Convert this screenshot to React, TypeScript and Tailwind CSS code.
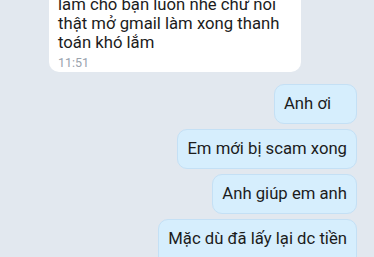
const sent = [
  { text: 'Anh ơi', pr: 'pr-[25px]' },
  { text: 'Em mới bị scam xong', pr: 'pr-[9px]' },
  { text: 'Anh giúp em anh', pr: 'pr-[9px]' },
];

const App = () => {
  return (
    <div
      className="h-[257px] w-[374px] overflow-hidden bg-[#e2e8ef] text-[16.7px] text-[#1c1c1c]"
      style={{ fontFamily: 'Roboto, "Noto Sans", sans-serif' }}
    >
      <div className="-mt-[13px] flex flex-col">
        {/* received message */}
        <div className="ml-[49px] w-[252px] rounded-[10px] bg-white pb-[2px] pl-[9px] pr-[9px] pt-[8px]">
          <p className="leading-[19px]">
            làm cho bạn luôn nhé chứ nói
            <br />
            thật mở gmail làm xong thanh
            <br />
            toán khó lắm
          </p>
          <div className="mt-[3px] text-[12.5px] leading-[15px] text-[#9aa3ad]">11:51</div>
        </div>

        {/* sent messages */}
        <div className="mt-[12px] flex flex-col items-end gap-[5px] pr-[17px]">
          {sent.map((m) => (
            <div
              key={m.text}
              className={`h-[40px] rounded-[10px] border border-[#c4e0f5] bg-[#d6eefd] pl-[9px] ${m.pr} py-[9px] leading-[20px]`}
            >
              {m.text}
            </div>
          ))}
          <div className="rounded-[10px] border border-[#c4e0f5] bg-[#d6eefd] px-[9px] pt-[9px] leading-[20px]">
            Mặc dù đã lấy lại dc tiền
            <div className="mt-[5px] text-[12.5px] leading-[15px] text-[#9aa3ad]">11:52</div>
          </div>
        </div>
      </div>
    </div>
  );
};

export default App;
